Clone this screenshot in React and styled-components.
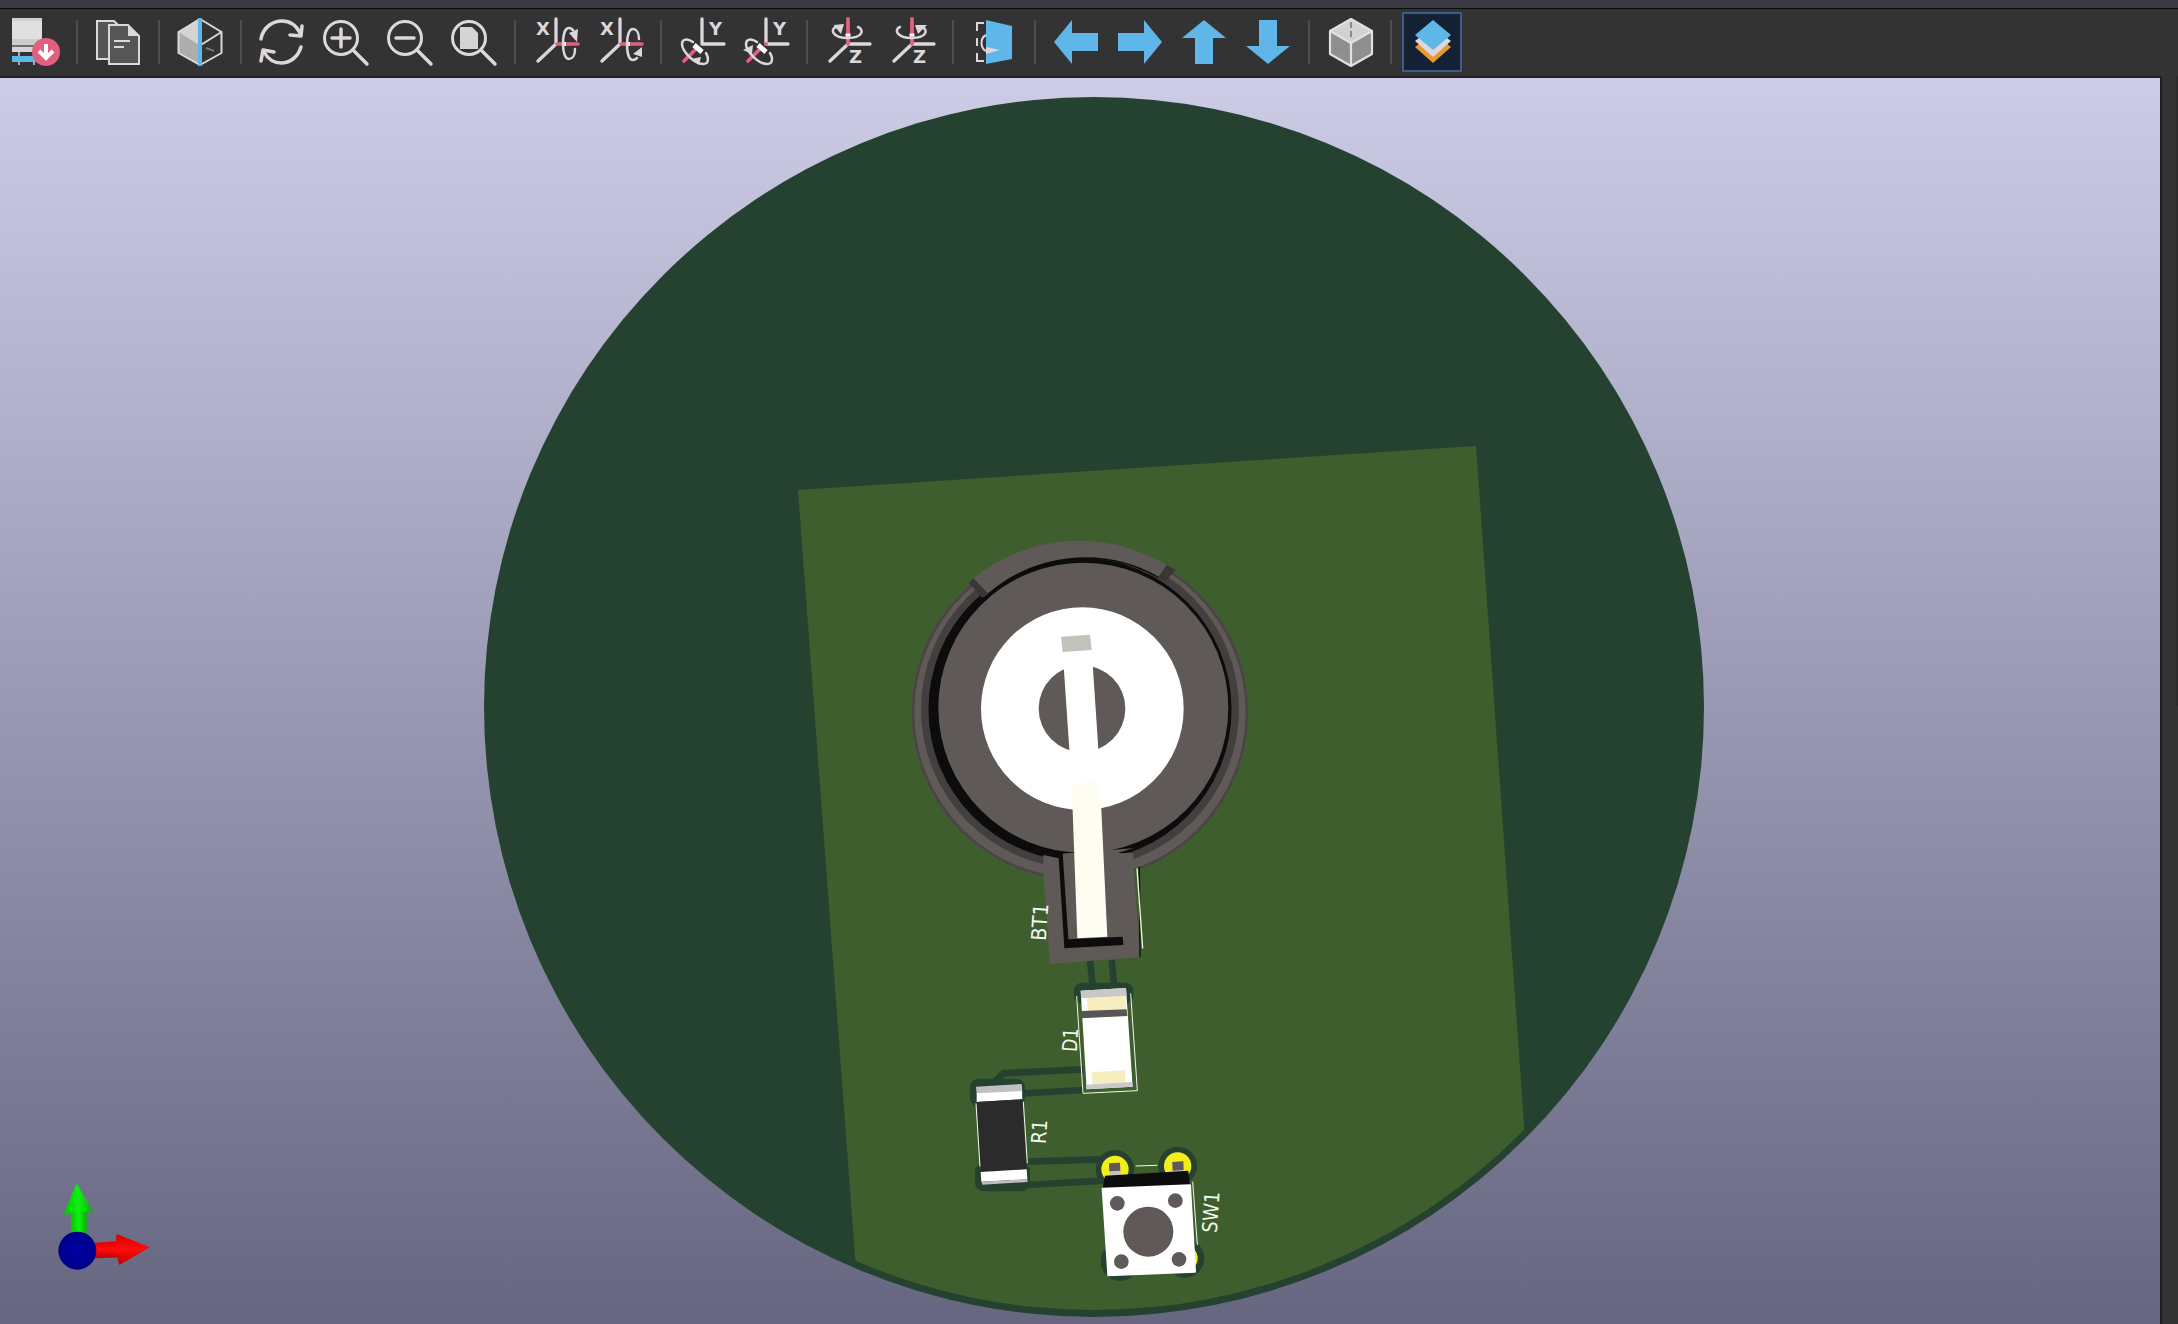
import React from 'react';
import styled, { createGlobalStyle } from 'styled-components';

const GREY = '#ddd6dd';
const RED = '#e2607e';
const BLUE = '#5fb6e8';
const FONT = '"DejaVu Sans", sans-serif';

const GlobalStyle = createGlobalStyle`
    html, body {
        margin: 0;
        padding: 0;
        background: #333333;
        overflow: hidden;
    }
`;

const Window = styled.div`
    display: flex;
    flex-direction: column;
    width: 2178px;
    height: 1324px;
    background: #333333;
`;

const TitleStrip = styled.div`
    flex: none;
    height: 8px;
    background: #3a3842;
    border-bottom: 1px solid #0c0c0e;
`;

const Toolbar = styled.div`
    flex: none;
    display: flex;
    align-items: center;
    box-sizing: border-box;
    height: 67px;
    padding: 0 0 1px 4px;
    background: #333333;
`;

const ToolButton = styled.div`
    flex: none;
    display: flex;
    align-items: center;
    justify-content: center;
    box-sizing: border-box;
    width: 60px;
    height: 60px;
    margin: 0 2px;
    background: ${({ $active }) => ($active ? '#142033' : 'transparent')};
    border: 2px solid ${({ $active }) => ($active ? '#3b5d86' : 'transparent')};
`;

const IconSvg = styled.svg`
    display: block;
    flex: none;
    width: 48px;
    height: 48px;
    overflow: visible;
`;

const Separator = styled.div`
    flex: none;
    width: 2px;
    height: 44px;
    margin: 0 8px;
    background: #4d4d4d;
`;

const Body = styled.div`
    flex: 1;
    display: flex;
    min-height: 0;
`;

const Viewport = styled.div`
    flex: none;
    width: 2160px;
    border-top: 2px solid #1f1f22;
    border-right: 2px solid #1f1f22;
    background: linear-gradient(to bottom, #ccccE6, #666680);
`;

const Scene = styled.svg`
    display: block;
    width: 2160px;
    height: 1246px;
`;

const RightColumn = styled.div`
    flex: 1;
    display: flex;
    justify-content: flex-end;
`;

const ScrollThumb = styled.div`
    width: 2px;
    height: 630px;
    background: #2b2b2b;
`;

const Icon = ({ children }) => (
    <IconSvg viewBox="0 0 48 48" fill="none">{children}</IconSvg>
);

const Letter = ({ x, y, children }) => (
    <text x={x} y={y} fontFamily={FONT} fontSize="18" fontWeight="700" fill={GREY}>{children}</text>
);

const SaveIcon = () => (
    <Icon>
        <rect x="0" y="0" width="30" height="3" fill="#d3ced6" />
        <rect x="0" y="3" width="30" height="18" fill="#e0e0e0" />
        <rect x="0" y="21" width="30" height="6" fill="#cfcacf" />
        <rect x="0" y="27" width="30" height="2" fill="#6e6e6e" />
        <rect x="0" y="29" width="26" height="5" fill="#d8d3d8" />
        <rect x="6" y="34" width="2" height="4" fill="#aaa" />
        <rect x="0" y="38" width="24" height="6" fill={BLUE} />
        <rect x="6" y="44" width="2" height="3" fill="#aaa" />
        <rect x="21" y="44" width="2" height="3" fill="#aaa" />
        <circle cx="34" cy="34" r="14" fill={RED} />
        <path d="M34 26v14M27 33l7 7 7-7" stroke="#fff" strokeWidth="4" />
    </Icon>
);

const PagesIcon = () => (
    <Icon>
        <path d="M3 3h17l5 5v33H3z" fill="#565656" stroke={GREY} strokeWidth="2" />
        <path d="M15 7h19l11 11v28H15z" fill="#565656" stroke={GREY} strokeWidth="2" />
        <path d="M34 7v11h11z" fill={GREY} />
        <path d="M20 23h16M20 29h10" stroke={GREY} strokeWidth="2" />
    </Icon>
);

const HalfCubeIcon = () => (
    <Icon>
        <path d="M24 0L2.5 14v21L24 48z" fill="#adadad" />
        <path d="M24 0L2.5 14 24 27.5z" fill="#d4d4d4" />
        <path d="M24 1l21.5 13v21L24 47 2.5 35V14zM24 27.5L45.5 14" stroke={GREY} strokeWidth="2" strokeLinejoin="round" />
        <path d="M30 30l8 3" stroke="#777" strokeWidth="2" />
        <rect x="22" y="0" width="4" height="48" fill={BLUE} />
    </Icon>
);

const RefreshIcon = () => (
    <Icon>
        <path d="M3 21C5 9 15 3 24 3c8 0 14 4 18 12" stroke={GREY} strokeWidth="3.5" strokeLinecap="round" />
        <path d="M44 8l-1 10-11-1" stroke={GREY} strokeWidth="3.5" strokeLinecap="round" strokeLinejoin="round" />
        <path d="M43 29c-3 10-11 16-20 16-7 0-13-4-17-11" stroke={GREY} strokeWidth="3.5" strokeLinecap="round" />
        <path d="M3 43l2-11 11 2" stroke={GREY} strokeWidth="3.5" strokeLinecap="round" strokeLinejoin="round" />
    </Icon>
);

const Magnifier = ({ children }) => (
    <Icon>
        <circle cx="19" cy="20" r="16.5" stroke={GREY} strokeWidth="3" />
        <path d="M31 32l14 14" stroke={GREY} strokeWidth="3.5" strokeLinecap="round" />
        {children}
    </Icon>
);

const ZoomInIcon = () => (
    <Magnifier><path d="M19 11v18M10 20h18" stroke={GREY} strokeWidth="3.5" strokeLinecap="round" /></Magnifier>
);

const ZoomOutIcon = () => (
    <Magnifier><path d="M10 20h18" stroke={GREY} strokeWidth="3.5" strokeLinecap="round" /></Magnifier>
);

const ZoomFitIcon = () => (
    <Magnifier><path d="M10 9h12l6 6v16H10z" fill="#d4d4d4" /></Magnifier>
);

const RotateXIcon = ({ reverse }) => (
    <Icon>
        <Letter x="4" y="17">X</Letter>
        <path d="M24 1v25M24 26L6 43" stroke={GREY} strokeWidth="3.3" strokeLinecap="round" />
        <path d="M25 26h21" stroke={RED} strokeWidth="3.5" strokeLinecap="round" />
        <rect x="30" y="24" width="4" height="4" fill="#fff" />
        {reverse ? (
            <>
                <path d="M43 21C43 14 40 11 37 11 33 11 31 18 31 26 31 35 33 42 37 42 38 42 40 41 41 40" stroke={GREY} strokeWidth="2.5" strokeLinecap="round" />
                <path d="M46 39V29l-9 7z" fill={GREY} />
            </>
        ) : (
            <>
                <path d="M43 31C43 38 40 41 37 41 33 41 31 34 31 26 31 17 33 10 37 10 38 10 40 11 41 12" stroke={GREY} strokeWidth="2.5" strokeLinecap="round" />
                <path d="M46 11l-1 13-8-9z" fill={GREY} />
            </>
        )}
    </Icon>
);

const RotateYIcon = ({ reverse }) => (
    <Icon>
        <Letter x="31" y="17">Y</Letter>
        <path d="M24 1v25h22" stroke={GREY} strokeWidth="3.3" strokeLinecap="round" strokeLinejoin="round" />
        <path d="M17 32L6 43" stroke={RED} strokeWidth="3.8" strokeLinecap="round" />
        <path d="M15 24C9 20 4 21 4 26c0 7 12 20 21 20 6 0 6-6 3-11" stroke={GREY} strokeWidth="2.5" strokeLinecap="round" />
        <path d="M16 27l8 7" stroke="#fff" strokeWidth="5" />
        {reverse && <circle cx="24" cy="26" r="2" fill={RED} />}
        {reverse
            ? <path d="M1 32l10-5-1 9z" fill={GREY} />
            : <path d="M13 41l10-2-2 8z" fill={GREY} />}
    </Icon>
);

const RotateZIcon = ({ reverse }) => (
    <Icon>
        <Letter x="25" y="45">Z</Letter>
        <path d="M24 26h22M24 26L6 43" stroke={GREY} strokeWidth="3.3" strokeLinecap="round" />
        <path d="M24 1v25" stroke={RED} strokeWidth="3.8" strokeLinecap="round" />
        <path d="M12 9C6 11 8 20 24 20c14 0 17-8 10-11" stroke={GREY} strokeWidth="2.5" strokeLinecap="round" />
        <rect x="21.5" y="15.5" width="5" height="3" fill="#fff" />
        {reverse
            ? <path d="M27 7h12l-9 9z" fill={GREY} />
            : <path d="M9.5 7L20 6l-3 10z" fill={GREY} />}
    </Icon>
);

const FlipIcon = () => (
    <Icon>
        <path d="M14 5H7v8M7 20v8M7 35v8h7" stroke={GREY} strokeWidth="2" />
        <path d="M16 2l26 6v33l-26 5z" fill={BLUE} />
        <path d="M16 17c-6 3-6 13 0 16" stroke={GREY} strokeWidth="2" />
        <path d="M16 29l14 3-14 4z" fill={GREY} />
    </Icon>
);

const ArrowIcon = ({ points }) => (
    <Icon><polygon points={points} fill={BLUE} /></Icon>
);

const CubeIcon = () => (
    <Icon>
        <path d="M25 1L4 13v23l21 12 21-12V13z" fill="#8f8f8f" />
        <path d="M25 1L4 13l21 12 21-12z" fill="#d2d2d2" />
        <path d="M25 1L4 13v23l21 12 21-12V13zM4 13l21 12 21-12M25 25v23" stroke="#e3dfe3" strokeWidth="2.2" strokeLinejoin="round" />
        <path d="M25 4v18M8 33l16-7" stroke="#8a8a8a" strokeWidth="2" strokeDasharray="6 3" />
    </Icon>
);

const LayersIcon = () => (
    <Icon>
        <polygon points="7,29 25,15 43,29 25,45" fill="#e89a2e" />
        <polygon points="7,23 25,9 43,23 25,39" fill="#dcd8dc" />
        <polygon points="7,17 25,2 43,17 25,32" fill={BLUE} />
    </Icon>
);

const tools = [
    [<SaveIcon />], 'sep',
    [<PagesIcon />], 'sep',
    [<HalfCubeIcon />], 'sep',
    [<RefreshIcon />], [<ZoomInIcon />], [<ZoomOutIcon />], [<ZoomFitIcon />], 'sep',
    [<RotateXIcon />], [<RotateXIcon reverse />], 'sep',
    [<RotateYIcon />], [<RotateYIcon reverse />], 'sep',
    [<RotateZIcon />], [<RotateZIcon reverse />], 'sep',
    [<FlipIcon />], 'sep',
    [<ArrowIcon points="2,24 20,2 20,15 46,15 46,33 20,33 20,46" />],
    [<ArrowIcon points="46,24 28,2 28,15 2,15 2,33 28,33 28,46" />],
    [<ArrowIcon points="24,2 46,20 33,20 33,46 15,46 15,20 2,20" />],
    [<ArrowIcon points="24,46 46,28 33,28 33,2 15,2 15,28 2,28" />], 'sep',
    [<CubeIcon />], 'sep',
    [<LayersIcon />, true],
];

const SILK = { stroke: '#f4f6f0', strokeWidth: 3, fill: 'none' };
const TRACE = { stroke: '#254230', strokeWidth: 20, fill: 'none' };

// reference designator printed on the board, length measured along the text
const Silk = ({ x, y, length, children }) => (
    <text
        transform={`translate(${x} ${y}) rotate(-86)`}
        fontFamily={FONT}
        fontSize="62"
        fill="#f4f6f0"
        textLength={length}
        lengthAdjust="spacingAndGlyphs"
    >
        {children}
    </text>
);

const Holder = () => (
    <g transform="translate(880 520) scale(0.33333)">
        <path d="M630 1320l8 80M695 1320l8 80" stroke="#254230" strokeWidth="20" />
        <circle cx="600" cy="577" r="505" fill="#5f5957" />
        <circle cx="600" cy="577" r="501" fill="none" stroke="#4a4545" strokeWidth="8" />
        <circle cx="600" cy="568" r="466" fill="none" stroke="#433f3f" strokeWidth="22" />
        <circle cx="600" cy="568" r="455" fill="#0c0c0c" />
        <path d="M280 175A505 505 0 0 1 860 135L835 172A445 445 0 0 0 325 222Z" fill="#5f5957" />
        <path d="M280 175l45 47-18 12-40-45z" fill="#3a3636" />
        <path d="M860 135l-25 37 20 14 32-36z" fill="#3a3636" />
        <path d="M490 1056L510 1332 780 1312 760 1030 760 985 490 1005Z" fill="#5f5957" />
        <circle cx="610" cy="563" r="435" fill="#5f5957" />
        <path d="M325 222A445 445 0 0 1 835 172" fill="none" stroke="#0c0c0c" strokeWidth="4" />
        <path d="M490 1005L548 998 565 1258 728 1250 730 1275 553 1285 536 1015Z" fill="#0c0c0c" />
        <path d="M715 998l45-13v12l-35 3z" fill="#0c0c0c" />
        <circle cx="607" cy="566" r="304" fill="#fff" />
        <circle cx="606" cy="566" r="130" fill="#5f5957" />
        <polygon points="548,394 635,388 662,790 575,792" fill="#fff" />
        <polygon points="543,350 630,344 635,390 548,396" fill="#c2c2ba" />
        <polygon points="575,790 660,785 682,1250 592,1255" fill="#fdfdf2" />
        <path d="M778 1040l2 272" stroke="#111" strokeWidth="4" fill="none" />
        <path d="M771 1045l17 240" stroke="#f4f6f0" strokeWidth="4" fill="none" />
        <Silk x={497} y={1264} length={112}>BT1</Silk>
    </g>
);

const Parts = () => (
    <g transform="translate(940 930) scale(0.33333)">
        {/* traces and their clearance */}
        <path d="M165 455L190 430 430 418M250 490L430 480M260 695L490 688M260 765L490 752" {...TRACE} />
        <rect x="402" y="158" width="178" height="62" rx="24" fill="#254230" />
        <rect x="90" y="446" width="165" height="84" rx="26" fill="#254230" />
        <rect x="105" y="700" width="165" height="84" rx="26" fill="#254230" />

        {/* D1 */}
        <polygon points="422,182 558,174 578,470 440,478" fill="#fff" />
        <polygon points="422,182 558,174 560,200 424,205" fill="#c8c8c8" />
        <polygon points="440,204 556,197 558,240 444,243" fill="#f6eec0" />
        <polygon points="423,243 560,238 562,258 424,265" fill="#565656" />
        <polygon points="455,427 555,421 557,462 458,466" fill="#f6eec0" />
        <polygon points="438,464 576,456 578,470 440,478" fill="#c8c8c8" />
        <path d="M410 198L429 490 592 482 572 190" {...SILK} />
        <Silk x={410} y={367} length={72}>D1</Silk>

        {/* R1 */}
        <polygon points="108,470 245,462 247,485 110,492" fill="#c0c0c0" />
        <polygon points="110,490 246,483 247,508 110,516" fill="#fff" />
        <polygon points="110,516 247,508 260,718 122,726" fill="#2b2b2b" />
        <polygon points="122,726 260,718 262,748 124,755" fill="#fff" />
        <polygon points="124,755 262,748 263,756 128,764" fill="#bdbdbd" />
        <path d="M108 520l12 190M250 515l12 185" {...SILK} />
        <Silk x={317} y={643} length={73}>R1</Silk>

        {/* SW1 */}
        <circle cx="525" cy="718" r="58" fill="#254230" />
        <circle cx="713" cy="708" r="58" fill="#254230" />
        <circle cx="540" cy="995" r="58" fill="#254230" />
        <circle cx="735" cy="985" r="58" fill="#254230" />
        <circle cx="525" cy="718" r="41" fill="#f2ee1c" />
        <circle cx="713" cy="708" r="41" fill="#f2ee1c" />
        <circle cx="735" cy="985" r="38" fill="#f2ee1c" />
        <circle cx="540" cy="995" r="38" fill="#f2ee1c" />
        <polygon points="507,700 540,698 542,748 509,750" fill="#c4c4c4" />
        <polygon points="507,700 540,698 541,722 508,724" fill="#5f5957" />
        <polygon points="697,696 730,694 731,740 699,742" fill="#c4c4c4" />
        <polygon points="697,696 730,694 731,720 698,722" fill="#5f5957" />
        <polygon points="495,737 745,722 750,768 488,778" fill="#0c0c0c" />
        <polygon points="488,776 750,766 765,1025 505,1036" fill="#fff" stroke="#fff" strokeWidth="6" strokeLinejoin="round" />
        <circle cx="625" cy="905" r="75" fill="#5f5957" />
        <circle cx="532" cy="820" r="22" fill="#5f5957" />
        <circle cx="706" cy="812" r="22" fill="#5f5957" />
        <circle cx="544" cy="995" r="22" fill="#5f5957" />
        <circle cx="717" cy="988" r="22" fill="#5f5957" />
        <path d="M587 708l65-2M758 755l14 190" {...SILK} />
        <Silk x={830} y={910} length={124}>SW1</Silk>
    </g>
);

const Gizmo = () => (
    <g transform="translate(20 1160) scale(0.33333)">
        <rect x="153" y="155" width="47" height="70" fill="url(#gizmoGreen)" />
        <path d="M170 70L130 165Q175 148 220 158Z" fill="url(#gizmoGreen)" />
        <path d="M225 248L300 243 300 292 225 295Z" fill="url(#gizmoRed)" />
        <path d="M290 222L390 262 298 315Q282 265 290 222Z" fill="url(#gizmoRed)" />
        <circle cx="172" cy="272" r="57" fill="url(#gizmoBlue)" />
    </g>
);

const App = () => (
    <Window>
        <GlobalStyle />
        <TitleStrip />
        <Toolbar>
            {tools.map((tool, i) => (tool === 'sep'
                ? <Separator key={i} />
                : <ToolButton key={i} $active={tool[1]}>{tool[0]}</ToolButton>
            ))}
        </Toolbar>
        <Body>
            <Viewport>
                <Scene viewBox="0 78 2160 1246">
                    <defs>
                        <clipPath id="boardClip"><circle cx="1094" cy="707" r="603" /></clipPath>
                        <linearGradient id="gizmoGreen" x1="0" x2="1" y1="0" y2="0">
                            <stop offset="0" stopColor="#00c800" /><stop offset="0.5" stopColor="#10f010" /><stop offset="1" stopColor="#00b400" />
                        </linearGradient>
                        <linearGradient id="gizmoRed" x1="0" x2="0" y1="0" y2="1">
                            <stop offset="0" stopColor="#d80000" /><stop offset="0.5" stopColor="#ff0c0c" /><stop offset="1" stopColor="#b80000" />
                        </linearGradient>
                        <radialGradient id="gizmoBlue">
                            <stop offset="0" stopColor="#0000a8" /><stop offset="1" stopColor="#000088" />
                        </radialGradient>
                    </defs>
                    <circle cx="1094" cy="707" r="610" fill="#254230" />
                    <polygon points="798,490 1476,446 1540,1350 862,1350" fill="#3f5e2d" clipPath="url(#boardClip)" />
                    <Holder />
                    <Parts />
                    <Gizmo />
                </Scene>
            </Viewport>
            <RightColumn><ScrollThumb /></RightColumn>
        </Body>
    </Window>
);

export default App;
